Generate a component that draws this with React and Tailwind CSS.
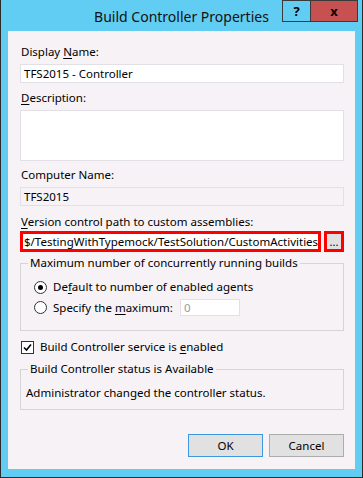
import React from 'react';

const font = "font-['Segoe_UI','Noto_Sans',sans-serif]";

function U({ children }) {
    return <span className="underline underline-offset-2">{children}</span>;
}

function Radio({ checked }) {
    return (
        <span className="flex h-[13px] w-[13px] items-center justify-center rounded-full border border-[#333] bg-white">
            {checked && <span className="h-[5px] w-[5px] rounded-full bg-black" />}
        </span>
    );
}

export default function App() {
    return (
        <div className={`flex h-[478px] w-[363px] flex-col border-x border-b border-[#2b2b2b] bg-[#62cdf2] text-[11.5px] leading-[16px] text-black ${font}`}>
            {/* title bar */}
            <div className="relative flex h-[31px] shrink-0 items-start justify-center">
                <span className="mt-[7px] text-[14px] leading-[20px] text-[#111]">Build Controller Properties</span>
                <div className="absolute right-[4px] top-0 flex h-[22px]">
                    <div className="flex w-[29px] items-center justify-center border border-[#3a3a3a] bg-[#62cdf2] text-[13px] font-bold">?</div>
                    <div className="-ml-px flex w-[48px] items-center justify-center border border-[#3a3a3a] bg-[#c75050] text-[13px] font-bold">x</div>
                </div>
            </div>

            {/* client area */}
            <div className="mx-[7px] flex h-[438px] flex-col bg-[#f6f2f6] pl-[12px] pr-[11px] pt-[13px]">
                <div className="ml-px">Display <U>N</U>ame:</div>
                <div className="mt-[4px] flex h-[19px] items-center border border-[#e3dfe6] bg-white px-[3px]">TFS2015 - Controller</div>

                <div className="ml-px mt-[7px]"><U>D</U>escription:</div>
                <div className="mt-[4px] h-[51px] border border-[#e3dfe6] bg-white" />

                <div className="ml-px mt-[6px]">Computer Name:</div>
                <div className="mt-[4px] flex h-[19px] items-center border border-[#e3dfe6] px-[3px]">TFS2015</div>

                <div className="ml-px mt-[8px]"><U>V</U>ersion control path to custom assemblies:</div>
                <div className="mt-[1px] flex h-[21px] gap-[3px]">
                    <div className="flex flex-1 items-center overflow-hidden whitespace-nowrap border-[3px] border-[#ff0000] bg-white px-[1px]">
                        $/TestingWithTypemock/TestSolution/CustomActivities
                    </div>
                    <div className="flex w-[20px] items-center justify-center border-[3px] border-[#ff0000] bg-[#e1e1e1] text-[11px] leading-none">...</div>
                </div>

                <fieldset className="mt-[3px] border border-[#d5d5d5]">
                    <legend className="ml-[7px] px-[2px]">Maximum number of concurrently running builds</legend>
                    <div className="pb-[14px] pl-[13px]">
                        <div className="mt-[8px] flex items-center gap-[6px]">
                            <Radio checked />
                            <span>De<U>f</U>ault to number of enabled agents</span>
                        </div>
                        <div className="mt-[4px] flex items-center gap-[6px]">
                            <Radio />
                            <span>Specify the <U>m</U>aximum:</span>
                            <div className="ml-[1px] flex h-[17px] w-[60px] items-center border border-[#e3dfe6] bg-white px-[3px] text-[#9a9a9a]">0</div>
                        </div>
                    </div>
                </fieldset>

                <div className="mt-[8px] flex items-center gap-[6px] pl-px">
                    <span className="flex h-[13px] w-[13px] items-center justify-center border border-[#333] bg-white">
                        <svg width="9" height="9" viewBox="0 0 9 9">
                            <path d="M1 4.5 L3.5 7 L8 1.5" fill="none" stroke="#000" strokeWidth="1.6" />
                        </svg>
                    </span>
                    <span>Build Controller service is <U>e</U>nabled</span>
                </div>

                <fieldset className="mt-[6px] border border-[#d5d5d5]">
                    <legend className="ml-[7px] px-[2px]">Build Controller status is Available</legend>
                    <div className="mt-[8px] pb-[8px] pl-[5px]">Administrator changed the controller status.</div>
                </fieldset>

                <div className="mt-[24px] flex justify-end gap-[6px]">
                    <button className="flex h-[23px] w-[75px] items-center justify-center border border-[#3c96e0] bg-[#e1e1e1]">OK</button>
                    <button className="flex h-[23px] w-[75px] items-center justify-center border border-[#adadad] bg-[#e1e1e1]">Cancel</button>
                </div>
            </div>
        </div>
    );
}
